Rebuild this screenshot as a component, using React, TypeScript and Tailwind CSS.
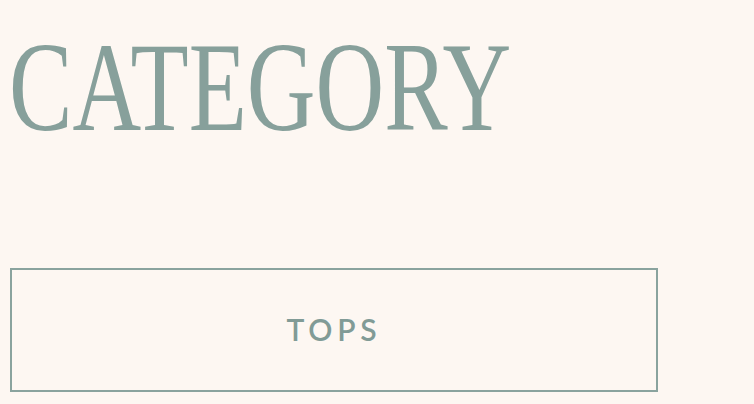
export default function App() {
  return (
    <div className="h-[404px] w-[754px] overflow-hidden bg-[#fdf7f2]">
      <h1 className="ml-[9px] mt-[25px] origin-left scale-x-[0.755] whitespace-nowrap font-['Liberation_Serif',serif] text-[126px] font-normal leading-none text-[#87a09b]">
        CATEGORY
      </h1>
      <div className="ml-[10px] mt-[117px] flex h-[124px] w-[648px] items-center justify-center border-2 border-[#8aa39e] pb-[2px]">
        <span className="font-['Lato',sans-serif] text-[30px] font-semibold leading-none tracking-[0.16em] text-[#819b96]">
          TOPS
        </span>
      </div>
    </div>
  );
}
